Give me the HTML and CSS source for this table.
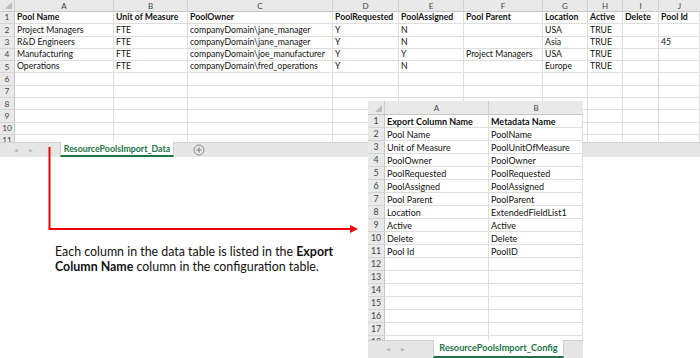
FILE: index.html
```html
<!DOCTYPE html>
<html>
<head>
<meta charset="utf-8">
<link rel="stylesheet" href="styles.css">
</head>
<body>
<div class="page">
  <div class="sheet main">
    <div class="grid main-grid">
      <div class="hd corner"><span class="tri"></span></div>
      <div class="hd">A</div><div class="hd">B</div><div class="hd">C</div><div class="hd">D</div><div class="hd">E</div><div class="hd">F</div><div class="hd">G</div><div class="hd">H</div><div class="hd">I</div><div class="hd last">J</div>

      <div class="rn">1</div>
      <div class="c b">Pool Name</div><div class="c b">Unit of Measure</div><div class="c b">PoolOwner</div><div class="c b">PoolRequested</div><div class="c b">PoolAssigned</div><div class="c b">Pool Parent</div><div class="c b">Location</div><div class="c b">Active</div><div class="c b">Delete</div><div class="c b">Pool Id</div>

      <div class="rn">2</div>
      <div class="c">Project Managers</div><div class="c">FTE</div><div class="c">companyDomain\jane_manager</div><div class="c">Y</div><div class="c">N</div><div class="c"></div><div class="c">USA</div><div class="c">TRUE</div><div class="c"></div><div class="c"></div>

      <div class="rn">3</div>
      <div class="c">R&amp;D Engineers</div><div class="c">FTE</div><div class="c">companyDomain\jane_manager</div><div class="c">Y</div><div class="c">N</div><div class="c"></div><div class="c">Asia</div><div class="c">TRUE</div><div class="c"></div><div class="c">45</div>

      <div class="rn">4</div>
      <div class="c">Manufacturing</div><div class="c">FTE</div><div class="c">companyDomain\joe_manufacturer</div><div class="c">Y</div><div class="c">Y</div><div class="c">Project Managers</div><div class="c">USA</div><div class="c">TRUE</div><div class="c"></div><div class="c"></div>

      <div class="rn">5</div>
      <div class="c">Operations</div><div class="c">FTE</div><div class="c">companyDomain\fred_operations</div><div class="c">Y</div><div class="c">N</div><div class="c"></div><div class="c">Europe</div><div class="c">TRUE</div><div class="c"></div><div class="c"></div>

      <div class="rn">6</div><div class="c"></div><div class="c"></div><div class="c"></div><div class="c"></div><div class="c"></div><div class="c"></div><div class="c"></div><div class="c"></div><div class="c"></div><div class="c"></div>
      <div class="rn">7</div><div class="c"></div><div class="c"></div><div class="c"></div><div class="c"></div><div class="c"></div><div class="c"></div><div class="c"></div><div class="c"></div><div class="c"></div><div class="c"></div>
      <div class="rn">8</div><div class="c"></div><div class="c"></div><div class="c"></div><div class="c"></div><div class="c"></div><div class="c"></div><div class="c"></div><div class="c"></div><div class="c"></div><div class="c"></div>
      <div class="rn">9</div><div class="c"></div><div class="c"></div><div class="c"></div><div class="c"></div><div class="c"></div><div class="c"></div><div class="c"></div><div class="c"></div><div class="c"></div><div class="c"></div>
      <div class="rn">10</div><div class="c"></div><div class="c"></div><div class="c"></div><div class="c"></div><div class="c"></div><div class="c"></div><div class="c"></div><div class="c"></div><div class="c"></div><div class="c"></div>
      <div class="rn">11</div><div class="c"></div><div class="c"></div><div class="c"></div><div class="c"></div><div class="c"></div><div class="c"></div><div class="c"></div><div class="c"></div><div class="c"></div><div class="c"></div>
    </div>
    <div class="tabbar main-tabbar">
      <div class="navs"><span class="nav">&#9664;</span><span class="nav">&#9654;</span></div>
      <div class="tab">ResourcePoolsImport_Data</div>
      <svg class="plus" width="12" height="12" viewBox="0 0 12 12"><circle cx="6" cy="6" r="5" fill="none" stroke="#8a8a8a" stroke-width="1"/><path d="M6 3.2v5.6M3.2 6h5.6" stroke="#8a8a8a" stroke-width="1.2"/></svg>
    </div>
  </div>

  <p class="note">Each column in the data table is listed in the <b>Export Column Name</b> column in the configuration table.</p>

  <svg class="arrow" width="360" height="240" viewBox="0 0 360 240">
    <path d="M49.5 147 V229 H351" fill="none" stroke="#f00000" stroke-width="2"/>
    <path d="M350 225 L358 229 L350 233 Z" fill="#f00000"/>
  </svg>

  <div class="sheet config">
    <div class="grid cfg-grid">
      <div class="hd corner"><span class="tri"></span></div>
      <div class="hd">A</div><div class="hd last">B</div>
      <div class="rn">1</div><div class="c b">Export Column Name</div><div class="c b">Metadata Name</div>
      <div class="rn">2</div><div class="c">Pool Name</div><div class="c">PoolName</div>
      <div class="rn">3</div><div class="c">Unit of Measure</div><div class="c">PoolUnitOfMeasure</div>
      <div class="rn">4</div><div class="c">PoolOwner</div><div class="c">PoolOwner</div>
      <div class="rn">5</div><div class="c">PoolRequested</div><div class="c">PoolRequested</div>
      <div class="rn">6</div><div class="c">PoolAssigned</div><div class="c">PoolAssigned</div>
      <div class="rn">7</div><div class="c">Pool Parent</div><div class="c">PoolParent</div>
      <div class="rn">8</div><div class="c">Location</div><div class="c">ExtendedFieldList1</div>
      <div class="rn">9</div><div class="c">Active</div><div class="c">Active</div>
      <div class="rn">10</div><div class="c">Delete</div><div class="c">Delete</div>
      <div class="rn">11</div><div class="c">Pool Id</div><div class="c">PoolID</div>
      <div class="rn">12</div><div class="c"></div><div class="c"></div>
      <div class="rn">13</div><div class="c"></div><div class="c"></div>
      <div class="rn">14</div><div class="c"></div><div class="c"></div>
      <div class="rn">15</div><div class="c"></div><div class="c"></div>
      <div class="rn">16</div><div class="c"></div><div class="c"></div>
      <div class="rn">17</div><div class="c"></div><div class="c"></div>
      <div class="rn">18</div><div class="c"></div><div class="c"></div>
    </div>
    <div class="tabbar cfg-tabbar">
      <div class="navs"><span class="nav">&#9664;</span><span class="nav">&#9654;</span></div>
      <div class="tab">ResourcePoolsImport_Config</div>
    </div>
  </div>
</div>
</body>
</html>
```

FILE: styles.css
```css
* { box-sizing: border-box; }
html, body { margin: 0; padding: 0; background: #fff; }
body { width: 700px; height: 358px; overflow: hidden; font-family: Lato, "Open Sans", sans-serif; color: #111; }
.page { position: relative; width: 700px; height: 358px; }

.sheet { display: flex; flex-direction: column; background: #fff; }
.grid { display: grid; overflow: hidden; font-size: 8.7px; }

.main-grid {
  grid-template-columns: 15px 99px 74px 145px 66px 65px 79px 45px 35px 36px 41px;
  grid-template-rows: 12px repeat(11, 12.3px);
  height: 141.7px;
  align-content: start;
}
.main-tabbar { height: 15.3px; }

.hd {
  background: #e9e9e9;
  border-right: 1px solid #cfcfcf;
  border-bottom: 1px solid #c6c6c6;
  color: #444;
  display: flex; align-items: center; justify-content: center;
  font-size: 8px;
  line-height: 1;
}
.hd.last { border-right: none; }
.corner { position: relative; }
.tri {
  position: absolute; right: 2px; bottom: 2px;
  width: 0; height: 0;
  border-left: 7px solid transparent;
  border-bottom: 7px solid #bdbdbd;
}
.rn {
  background: #e9e9e9;
  border-right: 1px solid #c6c6c6;
  border-bottom: 1px solid #d4d4d4;
  color: #444;
  display: flex; align-items: center; justify-content: center;
  font-size: 8.4px;
  line-height: 1;
}
.c {
  border-right: 1px solid #dedede;
  border-bottom: 1px solid #dedede;
  padding-left: 2px;
  display: flex; align-items: center;
  white-space: nowrap; overflow: visible;
  line-height: 1;
}
.c.b { font-weight: bold; }

.tabbar {
  background: #e6e6e6;
  display: flex; align-items: stretch;
  border-top: 1px solid #d0d0d0;
}
.navs { display: flex; align-items: center; gap: 11px; padding-left: 14px; width: 60px; }
.nav { font-size: 5px; color: #b8b8b8; }
.tab {
  background: #fff;
  color: #217346;
  font-weight: bold;
  font-size: 8.8px;
  display: flex; align-items: center; justify-content: center;
  border-bottom: 2px solid #217346;
  border-left: 1px solid #cfcfcf;
  border-right: 1px solid #cfcfcf;
  margin-top: -1px;
}
.main-tabbar .tab { width: 114px; }
.plus { align-self: center; margin-left: 19px; }

.note {
  margin: 0;
  position: absolute; left: 55px; top: 245px;
  width: 300px;
  font-size: 12.4px;
  line-height: 14.6px;
  color: #111;
}
.arrow { position: absolute; left: 0; top: 0; }

.config {
  position: absolute; left: 368px; top: 101px;
  width: 215px; height: 257px;
}
.cfg-grid {
  grid-template-columns: 17px 104px 94px;
  grid-template-rows: 14px repeat(18, 13px);
  height: 238.5px;
  align-content: start;
  font-size: 9px;
}
.cfg-grid .rn { font-size: 8.8px; }
.cfg-tabbar { flex: 1; }
.cfg-tabbar .navs { width: 65px; padding-left: 18px; }
.cfg-tabbar .tab { width: 131px; font-size: 9.2px; }
```
